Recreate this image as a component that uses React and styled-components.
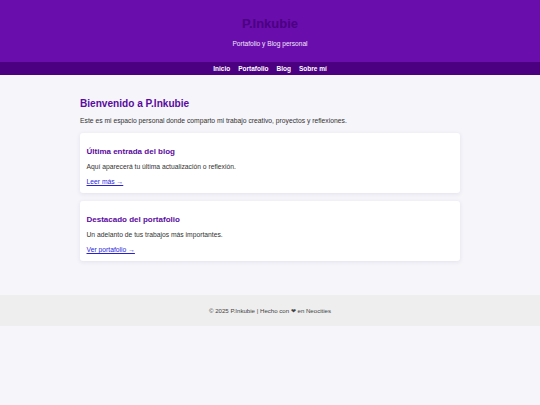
import React from "react";
import styled, { createGlobalStyle } from "styled-components";

const GlobalStyle = createGlobalStyle`
  html, body { margin: 0; padding: 0; }
  body {
    background: #f6f5fa;
    font-family: "Liberation Sans", Arial, sans-serif;
    font-size: 6.5px;
    color: #333;
  }
`;

const Header = styled.header`
  background: #6a0dad;
  text-align: center;
  padding: 15.5px 0 14px;
`;

const SiteTitle = styled.h1`
  margin: 0;
  font-size: 13px;
  line-height: 15px;
  font-weight: 700;
  color: #4b0082;
`;

const Tagline = styled.p`
  margin: 9.5px 0 0;
  font-size: 6.6px;
  line-height: 8px;
  color: #f0e6fa;
`;

const Nav = styled.nav`
  background: #4b0082;
  display: flex;
  justify-content: center;
  gap: 8px;
  height: 13px;
  align-items: center;
`;

const NavLink = styled.a`
  color: #ffffff;
  font-weight: 700;
  font-size: 6.5px;
  line-height: 13px;
  text-decoration: none;
`;

const Main = styled.main`
  max-width: 380px;
  margin: 0 auto;
  padding: 22.5px 0 34px;
`;

const Heading = styled.h2`
  margin: 0;
  font-size: 10.1px;
  line-height: 11px;
  font-weight: 700;
  color: #5a0aa0;
`;

const Intro = styled.p`
  margin: 8.5px 0 7.5px;
  font-size: 6.75px;
  line-height: 8px;
  color: #333;
`;

const Card = styled.section`
  background: #ffffff;
  border-radius: 3px;
  box-shadow: 0 1px 4px rgba(60, 40, 120, 0.1);
  padding: 6.5px 6.5px 6.5px;
  & + & { margin-top: 8px; }
`;

const CardTitle = styled.h3`
  margin: 7.5px 0 0;
  font-size: 8px;
  line-height: 9px;
  font-weight: 700;
  color: #5a0aa0;
`;

const CardText = styled.p`
  margin: 7.5px 0 0;
  font-size: 6.75px;
  line-height: 8px;
  color: #333;
`;

const CardLink = styled.a`
  display: inline-block;
  margin-top: 7px;
  font-size: 6.75px;
  line-height: 8px;
  color: #2a1fd8;
  text-decoration: underline;
`;

const Footer = styled.footer`
  background: #eeeeee;
  text-align: center;
  height: 31px;
  display: flex;
  align-items: center;
  justify-content: center;
  font-size: 6.1px;
  color: #444;
`;

export default function App() {
  return (
    <>
      <GlobalStyle />
      <Header>
        <SiteTitle>P.Inkubie</SiteTitle>
        <Tagline>Portafolio y Blog personal</Tagline>
      </Header>
      <Nav>
        <NavLink href="#">Inicio</NavLink>
        <NavLink href="#">Portafolio</NavLink>
        <NavLink href="#">Blog</NavLink>
        <NavLink href="#">Sobre mí</NavLink>
      </Nav>
      <Main>
        <Heading>Bienvenido a P.Inkubie</Heading>
        <Intro>
          Este es mi espacio personal donde comparto mi trabajo creativo, proyectos y reflexiones.
        </Intro>
        <Card>
          <CardTitle>Última entrada del blog</CardTitle>
          <CardText>Aquí aparecerá tu última actualización o reflexión.</CardText>
          <CardLink href="#">Leer más →</CardLink>
        </Card>
        <Card>
          <CardTitle>Destacado del portafolio</CardTitle>
          <CardText>Un adelanto de tus trabajos más importantes.</CardText>
          <CardLink href="#">Ver portafolio →</CardLink>
        </Card>
      </Main>
      <Footer>© 2025 P.Inkubie | Hecho con ❤ en Neocities</Footer>
    </>
  );
}
